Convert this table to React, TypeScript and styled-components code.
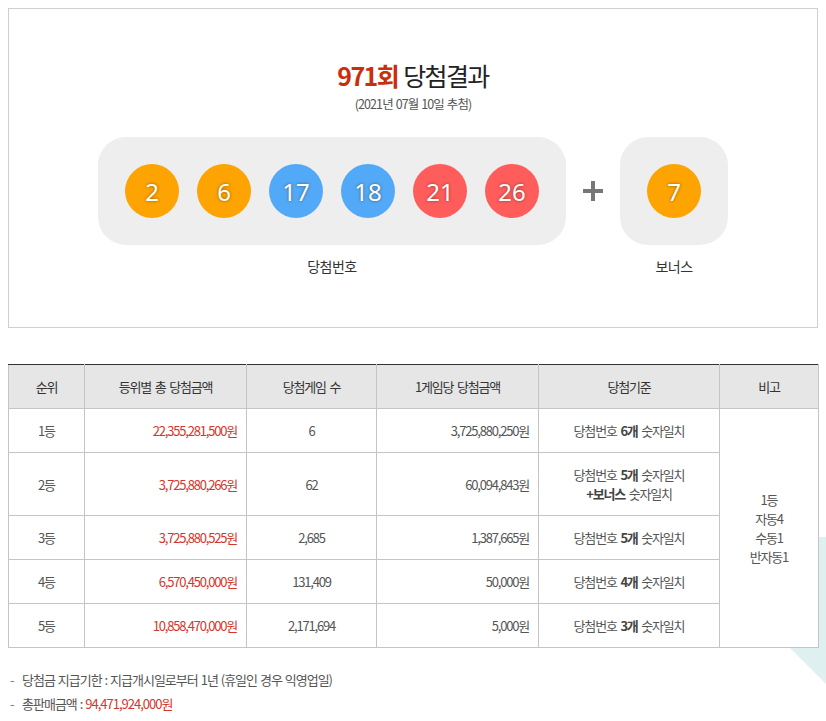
import React from "react";
import styled, { createGlobalStyle } from "styled-components";

const GlobalStyle = createGlobalStyle`
  html, body { margin: 0; padding: 0; background: #fff; }
  body { font-family: "Noto Sans CJK KR", "Noto Sans", sans-serif; color: #555; }
`;

const Page = styled.div`
  position: relative;
  padding: 8px 8px 20px;
  min-height: 721px;
  box-sizing: border-box;
  overflow: hidden;
`;

const Decoration = styled.svg`
  position: absolute;
  top: 537px;
  right: 0;
  width: 147px;
  height: 147px;
  z-index: 0;
`;

const ResultBox = styled.section`
  position: relative;
  z-index: 1;
  height: 320px;
  box-sizing: border-box;
  border: 1px solid #cfcfcf;
  background: #fff;
  padding-top: 48px;
  text-align: center;
`;

const Title = styled.h2`
  margin: 0;
  font-size: 25px;
  line-height: 36px;
  font-weight: 400;
  letter-spacing: -1.6px;
  word-spacing: 1px;
  color: #222;
`;

const Round = styled.strong`
  color: #cc2d0a;
  font-weight: 700;
`;

const DrawDate = styled.p`
  margin: 2px 0 0;
  font-size: 12.5px;
  line-height: 18px;
  letter-spacing: -0.9px;
  word-spacing: 1px;
  color: #555;
`;

const BallRow = styled.div`
  margin-top: 24px;
  display: flex;
  justify-content: center;
  align-items: flex-start;
`;

const Group = styled.div`
  display: flex;
  flex-direction: column;
  align-items: center;
`;

const BallTray = styled.div`
  height: 108px;
  box-sizing: border-box;
  padding: 0 27px;
  background: #eeeeee;
  border-radius: 28px;
  display: flex;
  align-items: center;
  gap: 18px;
`;

const Ball = styled.span<{ $color: string }>`
  width: 54px;
  height: 54px;
  border-radius: 50%;
  background: ${(p) => p.$color};
  color: #fff;
  display: flex;
  align-items: center;
  justify-content: center;
  font-family: "Noto Sans", sans-serif;
  font-size: 24px;
  font-weight: 400;
  text-shadow: 0 0 3px rgba(60, 40, 0, 0.6);
`;

const GroupLabel = styled.p`
  margin: 11px 0 0;
  font-size: 14px;
  line-height: 20px;
  letter-spacing: -0.5px;
  color: #333;
`;

const Plus = styled.div`
  width: 54px;
  height: 108px;
  display: flex;
  align-items: center;
  justify-content: center;
`;

const Table = styled.table`
  position: relative;
  z-index: 1;
  margin-top: 36px;
  width: 810px;
  border-collapse: collapse;
  table-layout: fixed;
  background: #fff;
  border-top: 1px solid #333;
  font-size: 13px;
  letter-spacing: -1.2px;
  word-spacing: 2px;
  color: #555;
`;

const HeadCell = styled.th`
  height: 43px;
  padding: 0;
  background: #e6e6e6;
  border: 1px solid #c4c4c4;
  border-top: 1px solid #333;
  font-weight: 400;
  color: #333;
  text-align: center;
`;

const Cell = styled.td<{ $align?: "left" | "right" | "center"; $red?: boolean; $tall?: boolean }>`
  height: ${(p) => (p.$tall ? "62px" : "43px")};
  padding: 0 ${(p) => (p.$align === "right" ? "9px" : "0")} 0 0;
  border: 1px solid #c4c4c4;
  text-align: ${(p) => p.$align ?? "center"};
  color: ${(p) => (p.$red ? "#d6352a" : "#555")};
  line-height: 19px;
  vertical-align: middle;
`;

const Em = styled.b`
  font-weight: 700;
  color: #444;
`;

const Notes = styled.ul`
  position: relative;
  z-index: 1;
  list-style: none;
  margin: 20px 0 0;
  padding: 0;
  font-size: 13px;
  letter-spacing: -1px;
  word-spacing: 1px;
  color: #555;
`;

const Note = styled.li`
  position: relative;
  padding-left: 14px;
  line-height: 24px;
  &::before {
    content: "-";
    position: absolute;
    left: 2px;
    top: 0;
    color: #777;
  }
`;

const Red = styled.span`
  color: #d6352a;
`;

const YELLOW = "#fda302";
const BLUE = "#52a9f7";
const RED = "#ff5c5c";

const colorFor = (n: number) => (n <= 10 ? YELLOW : n <= 20 ? BLUE : n <= 30 ? RED : n <= 40 ? "#aaa" : "#b0d840");

const numbers = [2, 6, 17, 18, 21, 26];
const bonus = 7;

type Row = { rank: string; total: string; count: string; per: string; k: string; bonusLine?: boolean };

const rows: Row[] = [
  { rank: "1등", total: "22,355,281,500원", count: "6", per: "3,725,880,250원", k: "6개" },
  { rank: "2등", total: "3,725,880,266원", count: "62", per: "60,094,843원", k: "5개", bonusLine: true },
  { rank: "3등", total: "3,725,880,525원", count: "2,685", per: "1,387,665원", k: "5개" },
  { rank: "4등", total: "6,570,450,000원", count: "131,409", per: "50,000원", k: "4개" },
  { rank: "5등", total: "10,858,470,000원", count: "2,171,694", per: "5,000원", k: "3개" },
];

export default function App() {
  return (
    <>
      <GlobalStyle />
      <Page>
        <Decoration viewBox="0 0 147 147" aria-hidden>
          <polygon points="0,0 147,0 147,147" fill="#dff0f0" />
        </Decoration>
        <ResultBox>
          <Title>
            <Round>971회</Round> 당첨결과
          </Title>
          <DrawDate>(2021년 07월 10일 추첨)</DrawDate>
          <BallRow>
            <Group>
              <BallTray>
                {numbers.map((n) => (
                  <Ball key={n} $color={colorFor(n)}>
                    {n}
                  </Ball>
                ))}
              </BallTray>
              <GroupLabel>당첨번호</GroupLabel>
            </Group>
            <Plus>
              <svg width="20" height="20" viewBox="0 0 20 20">
                <rect x="0" y="8" width="20" height="4" fill="#777" />
                <rect x="8" y="0" width="4" height="20" fill="#777" />
              </svg>
            </Plus>
            <Group>
              <BallTray>
                <Ball $color={colorFor(bonus)}>{bonus}</Ball>
              </BallTray>
              <GroupLabel>보너스</GroupLabel>
            </Group>
          </BallRow>
        </ResultBox>

        <Table>
          <colgroup>
            <col style={{ width: 76 }} />
            <col style={{ width: 162 }} />
            <col style={{ width: 130 }} />
            <col style={{ width: 162 }} />
            <col style={{ width: 181 }} />
            <col style={{ width: 99 }} />
          </colgroup>
          <thead>
            <tr>
              <HeadCell>순위</HeadCell>
              <HeadCell>등위별 총 당첨금액</HeadCell>
              <HeadCell>당첨게임 수</HeadCell>
              <HeadCell>1게임당 당첨금액</HeadCell>
              <HeadCell>당첨기준</HeadCell>
              <HeadCell>비고</HeadCell>
            </tr>
          </thead>
          <tbody>
            {rows.map((r, i) => (
              <tr key={r.rank}>
                <Cell $tall={r.bonusLine}>{r.rank}</Cell>
                <Cell $align="right" $red>
                  {r.total}
                </Cell>
                <Cell>{r.count}</Cell>
                <Cell $align="right">{r.per}</Cell>
                <Cell>
                  당첨번호 <Em>{r.k}</Em> 숫자일치
                  {r.bonusLine && (
                    <>
                      <br />
                      <Em>+보너스</Em> 숫자일치
                    </>
                  )}
                </Cell>
                {i === 0 && (
                  <Cell rowSpan={5}>
                    1등
                    <br />
                    자동4
                    <br />
                    수동1
                    <br />
                    반자동1
                  </Cell>
                )}
              </tr>
            ))}
          </tbody>
        </Table>

        <Notes>
          <Note>당첨금 지급기한 : 지급개시일로부터 1년 (휴일인 경우 익영업일)</Note>
          <Note>
            총판매금액 : <Red>94,471,924,000원</Red>
          </Note>
        </Notes>
      </Page>
    </>
  );
}
